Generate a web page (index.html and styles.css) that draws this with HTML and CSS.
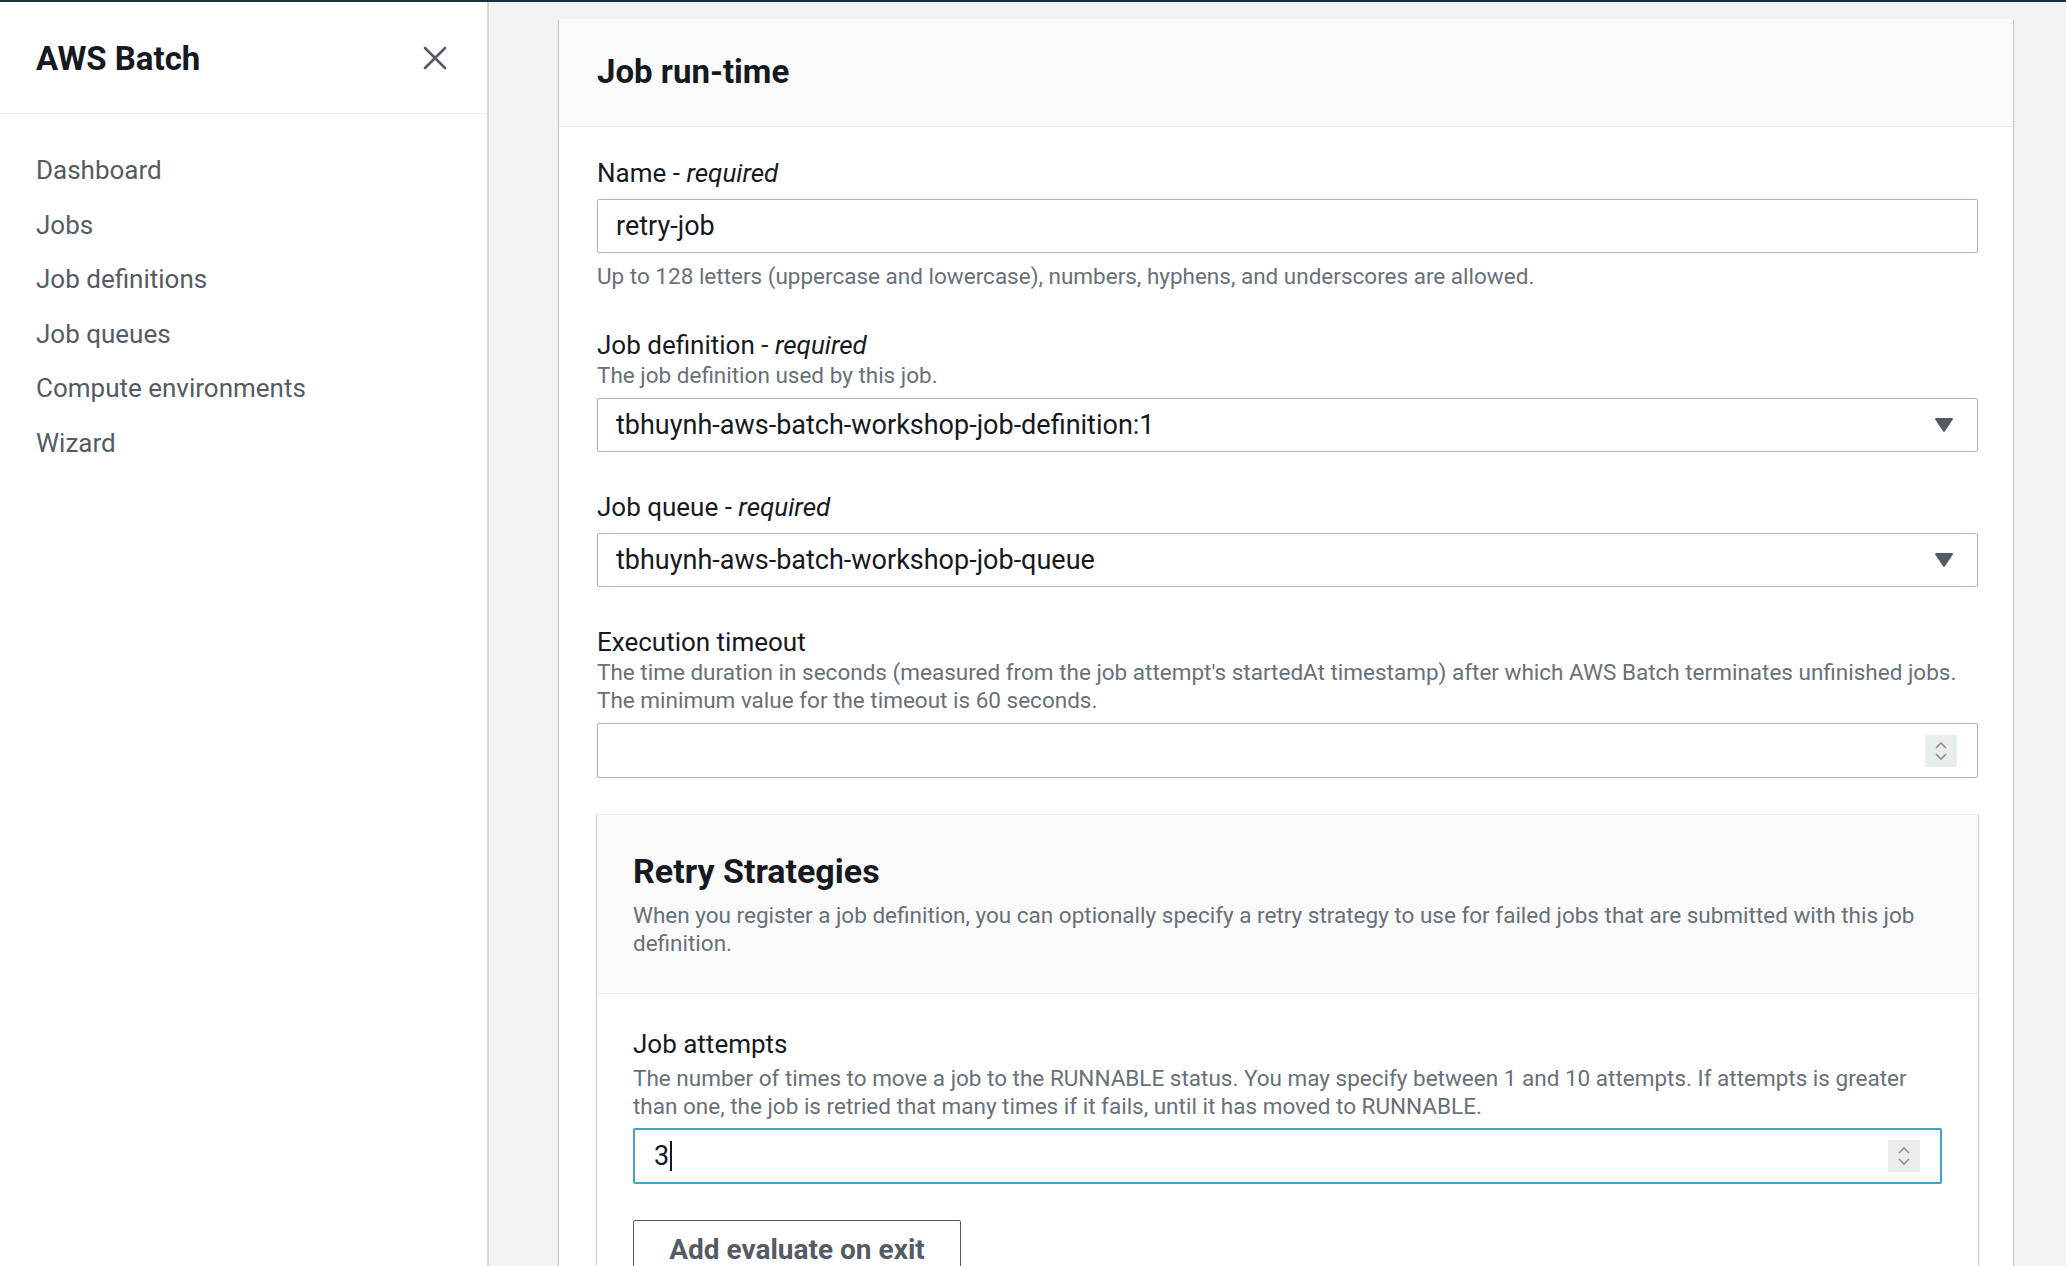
FILE: index.html
```html
<!DOCTYPE html>
<html lang="en">
<head>
<meta charset="utf-8">
<title>AWS Batch - Submit job</title>
<link rel="stylesheet" href="styles.css">
</head>
<body>
<div class="topbar"></div>
<div class="layout">
  <aside class="sidebar">
    <div class="side-header">
      <span class="side-title">AWS Batch</span>
      <svg class="close-icon" width="24" height="24" viewBox="0 0 24 24"><path d="M2 2 L22 22 M22 2 L2 22" stroke="#545b64" stroke-width="2.6" stroke-linecap="round" fill="none"/></svg>
    </div>
    <nav class="side-nav">
      <a class="nav-item">Dashboard</a>
      <a class="nav-item">Jobs</a>
      <a class="nav-item">Job definitions</a>
      <a class="nav-item">Job queues</a>
      <a class="nav-item">Compute environments</a>
      <a class="nav-item">Wizard</a>
    </nav>
  </aside>
  <main class="main">
    <section class="card">
      <header class="card-header"><h2 class="card-title">Job run-time</h2></header>
      <div class="card-body">
        <div class="field">
          <div class="label">Name - <i>required</i></div>
          <div class="control"><span class="value">retry-job</span></div>
          <div class="desc after">Up to 128 letters (uppercase and lowercase), numbers, hyphens, and underscores are allowed.</div>
        </div>
        <div class="field">
          <div class="label">Job definition - <i>required</i></div>
          <div class="desc">The job definition used by this job.</div>
          <div class="control select"><span class="value">tbhuynh-aws-batch-workshop-job-definition:1</span>
            <svg class="caret-down" width="20" height="16" viewBox="0 0 20 16"><path d="M2 2 L18 2 L10 14 Z" fill="#545b64" stroke="#545b64" stroke-width="2" stroke-linejoin="round"/></svg>
          </div>
        </div>
        <div class="field">
          <div class="label">Job queue - <i>required</i></div>
          <div class="control select"><span class="value">tbhuynh-aws-batch-workshop-job-queue</span>
            <svg class="caret-down" width="20" height="16" viewBox="0 0 20 16"><path d="M2 2 L18 2 L10 14 Z" fill="#545b64" stroke="#545b64" stroke-width="2" stroke-linejoin="round"/></svg>
          </div>
        </div>
        <div class="field field-last">
          <div class="label">Execution timeout</div>
          <div class="desc">The time duration in seconds (measured from the job attempt's startedAt timestamp) after which AWS Batch terminates unfinished jobs. The minimum value for the timeout is 60 seconds.</div>
          <div class="control number"><span class="value"></span>
            <span class="spinner"><svg width="32" height="32" viewBox="0 0 32 32"><path d="M11 13 L16 8 L21 13 M11 19 L16 24 L21 19" stroke="#879596" stroke-width="1.7" fill="none"/></svg></span>
          </div>
        </div>

        <section class="sub-panel">
          <header class="sub-header">
            <h3 class="sub-title">Retry Strategies</h3>
            <div class="desc sub-desc">When you register a job definition, you can optionally specify a retry strategy to use for failed jobs that are submitted with this job definition.</div>
          </header>
          <div class="sub-body">
            <div class="label">Job attempts</div>
            <div class="desc">The number of times to move a job to the RUNNABLE status. You may specify between 1 and 10 attempts. If attempts is greater than one, the job is retried that many times if it fails, until it has moved to RUNNABLE.</div>
            <div class="control number focused"><span class="value">3<span class="text-caret"></span></span>
              <span class="spinner"><svg width="32" height="32" viewBox="0 0 32 32"><path d="M11 13 L16 8 L21 13 M11 19 L16 24 L21 19" stroke="#879596" stroke-width="1.7" fill="none"/></svg></span>
            </div>
            <button class="btn">Add evaluate on exit</button>
          </div>
        </section>
      </div>
    </section>
  </main>
</div>
</body>
</html>
```

FILE: styles.css
```css
* { box-sizing: border-box; }
html, body { margin: 0; padding: 0; height: 100%; overflow: hidden; }
body {
  font-family: Roboto, "Liberation Sans", sans-serif;
  color: #16191f;
  background: #f2f3f3;
}
.topbar { height: 2px; background: #232f3e; }
.layout { display: flex; height: calc(100vh - 2px); }

.sidebar {
  width: 489px;
  flex: 0 0 489px;
  background: #fff;
  border-right: 2px solid #d5dbdb;
}
.side-header {
  height: 112px;
  border-bottom: 1px solid #eaeded;
  display: flex;
  align-items: flex-start;
  justify-content: space-between;
  padding: 37px 40px 0 36px;
}
.side-title { font-size: 33px; line-height: 40px; font-weight: 700; color: #16191f; }
.close-icon { margin-top: 7px; }
.side-nav { padding-top: 29px; display: flex; flex-direction: column; padding-left: 36px; }
.nav-item { font-size: 26px; line-height: 54.6px; color: #545b64; text-decoration: none; }

.main { flex: 1; padding: 17px 53px 0 70px; overflow: hidden; }
.card {
  background: #fff;
  box-shadow: 0 1px 1px 0 rgba(0,28,36,.3), 1px 1px 1px 0 rgba(0,28,36,.15), -1px 1px 1px 0 rgba(0,28,36,.15);
}
.card-header {
  height: 108px;
  background: #fafafa;
  border-bottom: 1px solid #eaeded;
  padding: 33px 38px 0;
}
.card-title { margin: 0; font-size: 33px; line-height: 40px; font-weight: 700; }
.card-body { padding: 30px 35px 0 38px; }

.field { margin-bottom: 39px; }
.field-last { margin-bottom: 36px; }
.label { font-size: 26px; line-height: 32px; color: #16191f; }
.label i { font-style: italic; }
.desc { font-size: 22.5px; line-height: 28px; color: #687078; }
.desc.after { margin-top: 9px; }
.label + .desc { margin-top: 0; }

.control {
  margin-top: 9px;
  height: 54px;
  border: 1px solid #aab7b8;
  border-radius: 2px;
  background: #fff;
  display: flex;
  align-items: center;
  padding: 0 20px 0 18px;
}
.label + .control { margin-top: 10px; }
.value { font-size: 27px; color: #16191f; flex: 1; display: flex; align-items: center; }
.select .caret-down { flex: 0 0 auto; margin-right: 3px; }
.number { height: 55px; }
.spinner {
  width: 32px; height: 32px;
  background: #eaeded;
  display: flex; align-items: center; justify-content: center;
}
.spinner svg { display: block; }
.focused {
  border: 2px solid #44a1c9;
  height: 56px;
  padding-left: 19px;
  margin-top: 8px;
}
.text-caret { display: inline-block; width: 1.5px; height: 30px; background: #16191f; margin-left: 1px; }

.sub-panel {
  margin-top: 0;
  border-top: 1px solid #eaeded;
  box-shadow: 0 1px 1px 0 rgba(0,28,36,.3), 1px 1px 1px 0 rgba(0,28,36,.15), -1px 1px 1px 0 rgba(0,28,36,.15);
  background: #fff;
}
.sub-header {
  background: #fafafa;
  border-bottom: 1px solid #eaeded;
  padding: 36px 36px 36px;
}
.sub-title { margin: 0; font-size: 34px; line-height: 40px; font-weight: 700; }
.sub-desc { margin-top: 10px; }
.sub-body { padding: 34px 36px 40px; }
.sub-body .desc { margin-top: 4px; }

.btn {
  margin-top: 36px;
  width: 328px;
  height: 58px;
  background: #fff;
  border: 1px solid #545b64;
  border-radius: 2px;
  font-family: Roboto, "Liberation Sans", sans-serif;
  font-size: 28px;
  font-weight: 700;
  color: #545b64;
  padding: 0;
}
```
